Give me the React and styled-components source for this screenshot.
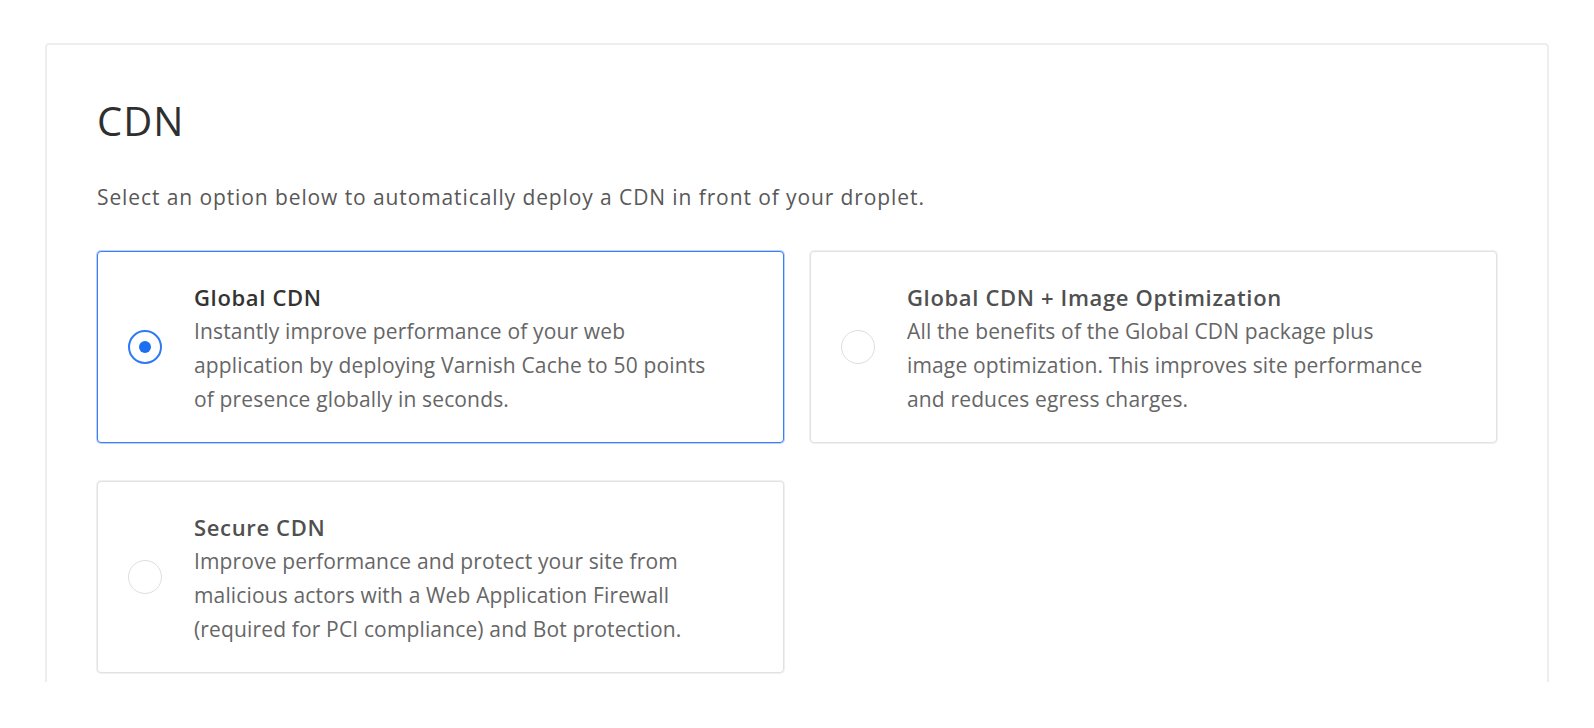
import React, { useState } from "react";
import styled, { createGlobalStyle } from "styled-components";

const GlobalStyle = createGlobalStyle`
  html, body {
    margin: 0;
    padding: 0;
    background: #ffffff;
  }
  body {
    font-family: "Open Sans", "Liberation Sans", Arial, sans-serif;
    -webkit-font-smoothing: antialiased;
  }
  * { box-sizing: border-box; }
`;

const Page = styled.div`
  padding: 43px 45px 0 45px;
  height: 728px;
  overflow: hidden;
`;

const Panel = styled.section`
  width: 1504px;
  height: 639px;
  border: 2px solid #eeeeee;
  border-bottom: none;
  border-radius: 4px 4px 0 0;
  padding: 52px 50px 0 50px;
  overflow: hidden;
`;

const Heading = styled.h2`
  margin: 0;
  font-size: 40px;
  line-height: 48px;
  font-weight: 400;
  letter-spacing: 1px;
  color: #2f2f2f;
`;

const Lead = styled.p`
  margin: 38px 0 0 0;
  font-size: 21px;
  line-height: 28px;
  letter-spacing: 0.9px;
  color: #585858;
`;

const Options = styled.div`
  margin-top: 40px;
  display: grid;
  grid-template-columns: 687px 687px;
  grid-auto-rows: 192px;
  column-gap: 26px;
  row-gap: 38px;
`;

const Option = styled.label`
  display: flex;
  align-items: center;
  gap: 32px;
  padding: 0 30px;
  border-radius: 4px;
  cursor: pointer;
  background: #ffffff;
  border: 1px solid ${(p) => (p.$selected ? "#3b7ef5" : "#e2e2e2")};
  box-shadow: 0 0 0 1px
    ${(p) => (p.$selected ? "rgba(59,126,245,0.35)" : "rgba(226,226,226,0.5)")};
`;

const Radio = styled.span`
  flex: none;
  width: 34px;
  height: 34px;
  border-radius: 50%;
  border: ${(p) => (p.$selected ? "2px solid #2f78f6" : "1.5px solid #dedede")};
  display: flex;
  align-items: center;
  justify-content: center;

  &::after {
    content: "";
    width: 12px;
    height: 12px;
    border-radius: 50%;
    background: #1d6ff2;
    display: ${(p) => (p.$selected ? "block" : "none")};
  }
`;

const Body = styled.div`
  padding-top: 2px;
`;

const Title = styled.div`
  font-size: 22px;
  line-height: 34px;
  font-weight: 600;
  letter-spacing: 0.65px;
  color: ${(p) => (p.$selected ? "#333333" : "#505050")};
`;

const Desc = styled.p`
  margin: 0;
  font-size: 21px;
  line-height: 34px;
  letter-spacing: 0.15px;
  color: #666666;
`;

const Line = styled.span`
  display: block;
  white-space: nowrap;
`;

const options = [
  {
    id: "global",
    title: "Global CDN",
    lines: [
      "Instantly improve performance of your web",
      "application by deploying Varnish Cache to 50 points",
      "of presence globally in seconds.",
    ],
  },
  {
    id: "image",
    title: "Global CDN + Image Optimization",
    lines: [
      "All the benefits of the Global CDN package plus",
      "image optimization. This improves site performance",
      "and reduces egress charges.",
    ],
  },
  {
    id: "secure",
    title: "Secure CDN",
    lines: [
      "Improve performance and protect your site from",
      "malicious actors with a Web Application Firewall",
      "(required for PCI compliance) and Bot protection.",
    ],
  },
];

export default function App() {
  const [selected, setSelected] = useState("global");
  return (
    <>
      <GlobalStyle />
      <Page>
        <Panel>
          <Heading>CDN</Heading>
          <Lead>
            Select an option below to automatically deploy a CDN in front of your droplet.
          </Lead>
          <Options>
            {options.map((o) => {
              const sel = o.id === selected;
              return (
                <Option key={o.id} $selected={sel} onClick={() => setSelected(o.id)}>
                  <Radio $selected={sel} />
                  <Body>
                    <Title $selected={sel}>{o.title}</Title>
                    <Desc>
                      {o.lines.map((l) => (
                        <Line key={l}>{l}</Line>
                      ))}
                    </Desc>
                  </Body>
                </Option>
              );
            })}
          </Options>
        </Panel>
      </Page>
    </>
  );
}
